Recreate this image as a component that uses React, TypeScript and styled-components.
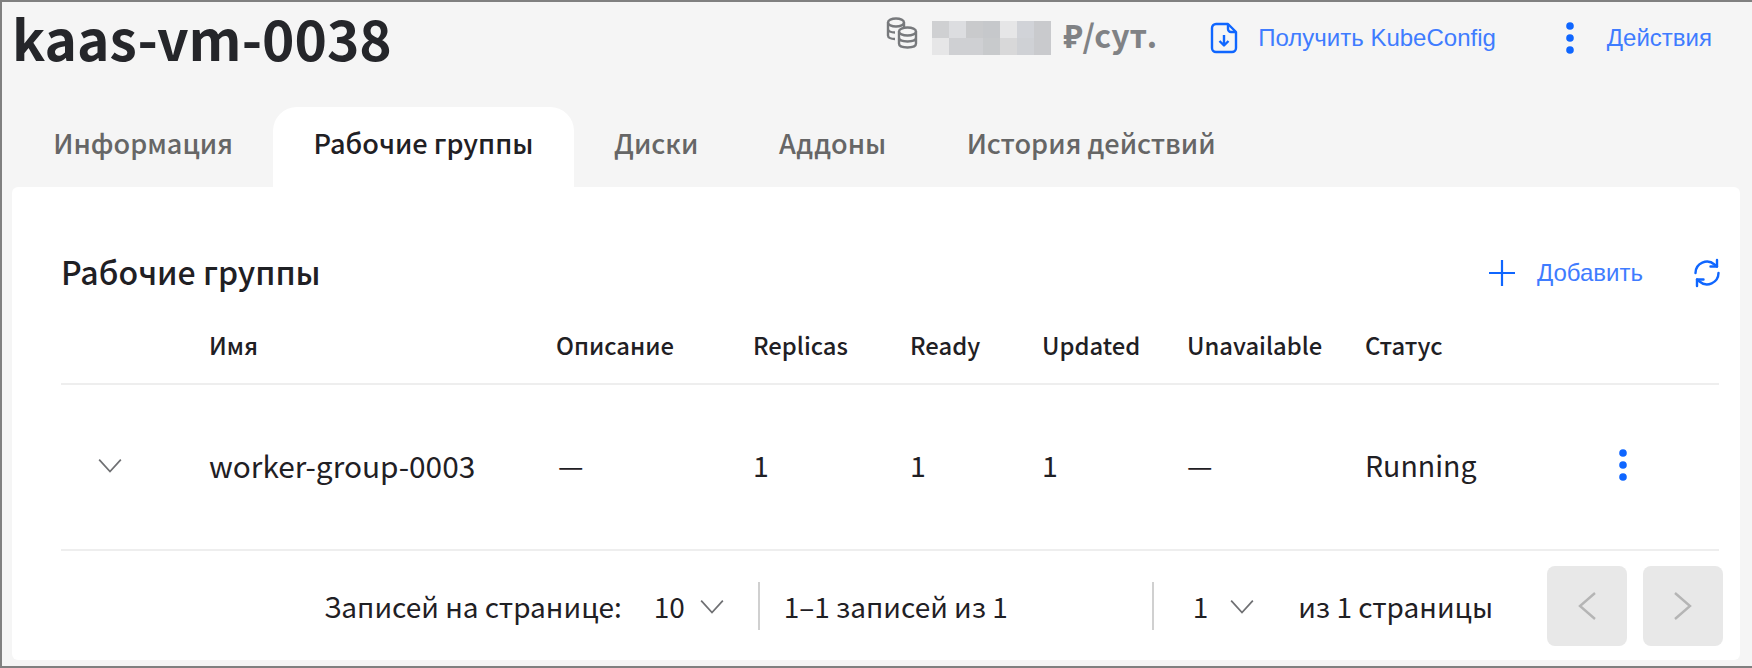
import React from "react";
import styled, { createGlobalStyle } from "styled-components";

const Global = createGlobalStyle`
  html, body { margin: 0; padding: 0; background: #f5f5f5; }
  * { box-sizing: border-box; }
`;

const Frame = styled.div`
  width: 1752px;
  height: 668px;
  border-top: 2px solid #808080;
  border-left: 2px solid #808080;
  border-bottom: 2px solid #808080;
  background: #f5f5f5;
  font-family: "Noto Sans CJK SC", "Noto Sans", sans-serif;
  color: #1f2024;
  display: flex;
  flex-direction: column;
`;

const Header = styled.header`
  height: 72px;
  display: flex;
  align-items: center;
  padding: 0 40px 0 10px;
`;

const Title = styled.h1`
  margin: 0;
  font-size: 55px;
  line-height: 70px;
  height: 72px;
  font-weight: 700;
  color: #25262a;
  flex: 1;
`;

const Price = styled.div`
  display: flex;
  align-items: center;
  color: #808285;
  font-size: 32px;
  line-height: 40px;
  font-weight: 700;
  margin-right: 53px;
`;

const CoinsSlot = styled.span`
  display: flex;
  margin: 0 14px 10px 0;
`;

const PriceUnit = styled.span`
  margin-bottom: 8px;
`;

const Blur = styled.div`
  display: grid;
  grid-template-columns: repeat(7, 17px);
  grid-template-rows: repeat(2, 17px);
  margin-right: 12px;
`;

const BlurCell = styled.span<{ $shade: string }>`
  background: ${(p) => p.$shade};
`;

const LinkButton = styled.button<{ $gap?: number; $ml?: number }>`
  border: 0;
  background: none;
  padding: 0;
  display: flex;
  align-items: center;
  gap: ${(p) => p.$gap ?? 20}px;
  margin-left: ${(p) => p.$ml ?? 0}px;
  font-family: "Liberation Sans", Arial, sans-serif;
  font-size: 24px;
  color: #3f7cff;
`;

const Tabs = styled.nav`
  height: 80px;
  margin-top: 33px;
  padding-left: 11px;
  display: flex;
`;

const Tab = styled.div<{ $active?: boolean }>`
  padding: 16px 40.25px 0;
  font-size: 27.100px;
  line-height: 40px;
  font-weight: 500;
  border-radius: 24px 24px 0 0;
  background: ${(p) => (p.$active ? "#fff" : "transparent")};
  color: ${(p) => (p.$active ? "#1f2024" : "#666666")};
`;

const Panel = styled.section`
  margin: 0 10px 0 10px;
  width: 1728px;
  height: 473px;
  background: #fff;
  border-radius: 6px;
  padding: 0 21px 0 49px;
  display: flex;
  flex-direction: column;
`;

const PanelHead = styled.div`
  height: 103px;
  padding-top: 65px;
  display: flex;
  align-items: center;
`;

const PanelTitle = styled.h2`
  margin: 0;
  flex: 1;
  font-size: 32px;
  line-height: 38px;
  font-weight: 500;
  color: #1f2024;
`;

const PanelActions = styled.div`
  display: flex;
  align-items: center;
  padding-top: 3px;
  margin-right: -2px;
`;

const Row = styled.div<{ $head?: boolean }>`
  display: grid;
  grid-template-columns: 148px 347px 197px 157px 132px 145px 178px 253px 1fr;
  align-items: center;
  height: ${(p) => (p.$head ? "95px" : "166px")};
  padding-top: ${(p) => (p.$head ? "17px" : "0")};
  padding-bottom: ${(p) => (p.$head ? "0" : "4px")};
  border-bottom: 2px solid #eeeeee;
  font-size: ${(p) => (p.$head ? "23.800px" : "28.500px")};
  line-height: 36px;
  font-weight: ${(p) => (p.$head ? 500 : 400)};
  color: #1f2024;
`;

const NameCell = styled.span`
  font-size: 29.800px;
`;

const DescCell = styled.span`
  padding-left: 2px;
`;

const Expand = styled.div`
  padding-left: 36px;
  display: flex;
`;

const Pager = styled.footer`
  flex: 1;
  display: flex;
  align-items: center;
  margin-right: -4px;
  font-size: 28px;
  line-height: 36px;
  color: #1f2024;
`;

const PagerLabel = styled.span<{ $left?: number }>`
  margin-left: ${(p) => p.$left ?? 0}px;
  white-space: nowrap;
`;

const Divider = styled.span<{ $left: number }>`
  width: 2px;
  height: 48px;
  background: #d0d0d0;
  margin-left: ${(p) => p.$left}px;
`;

const Select = styled.span<{ $left: number; $gap: number }>`
  margin-left: ${(p) => p.$left}px;
  display: flex;
  align-items: center;
  gap: ${(p) => p.$gap}px;
`;

const PageButton = styled.button<{ $left: number }>`
  flex: none;
  width: 80px;
  height: 80px;
  border: 0;
  padding: 0;
  border-radius: 8px;
  background: #e8e8e8;
  display: flex;
  align-items: center;
  justify-content: center;
  margin-left: ${(p) => p.$left}px;
`;

const Chevron = ({ color = "#6f7073", size = 26 }: { color?: string; size?: number }) => (
  <svg width={size} height={size} viewBox="0 0 24 24" fill="none" stroke={color} strokeWidth="1.6">
    <path d="M2 7l10 11L22 7" />
  </svg>
);

const Dots = () => (
  <svg width="10" height="34" viewBox="0 0 10 34" fill="#0f66ff">
    <circle cx="5" cy="5" r="3.800" />
    <circle cx="5" cy="17" r="3.800" />
    <circle cx="5" cy="29" r="3.800" />
  </svg>
);

const Coins = () => (
  <svg width="32" height="32" viewBox="0 0 32 32" fill="none" stroke="#77797c" strokeWidth="2.400">
    <ellipse cx="10" cy="5.500" rx="8" ry="4" />
    <path d="M2 5.500v13c0 2 3 3.500 7 3.500M2 12c0 2 3 3.500 7 3.500M18 5.500v5" />
    <ellipse cx="21.500" cy="14.500" rx="8.500" ry="4" />
    <path d="M13 14.500v12c0 2.500 3.500 4 8.500 4s8.500-1.500 8.500-4v-12M13 20.500c0 2.500 3.500 4 8.500 4s8.500-1.500 8.500-4" />
  </svg>
);

const Kube = () => (
  <svg width="28" height="32" viewBox="0 0 28 32" fill="none" stroke="#0f66ff" strokeWidth="2.400" strokeLinejoin="round">
    <path d="M18 2H6a4 4 0 0 0-4 4v20a4 4 0 0 0 4 4h16a4 4 0 0 0 4-4V10z" />
    <path d="M18 2v5a3 3 0 0 0 3 3h5" />
    <path d="M14 13v10M9.500 19l4.500 4.500 4.500-4.500" />
  </svg>
);

const Plus = () => (
  <svg width="26" height="26" viewBox="0 0 26 26" stroke="#0f66ff" strokeWidth="2.200">
    <path d="M13 0v26M0 13h26" />
  </svg>
);

const Refresh = () => (
  <svg width="28" height="30" viewBox="0 0 28 30" fill="none" stroke="#0f66ff" strokeWidth="2.400" strokeLinecap="round" strokeLinejoin="round">
    <path d="M2.500 15A11.500 11.500 0 0 1 21.500 6.500L24 8.500" />
    <path d="M24 2v6.500h-6.500" />
    <path d="M25.500 15A11.500 11.500 0 0 1 6.500 23.500L4 21.500" />
    <path d="M4 28v-6.500h6.500" />
  </svg>
);

const shades = [
  "#cfd0d2", "#dcdde0", "#c9cacc", "#c6c8cb", "#e6e6e7", "#d1d3d8", "#c9cacd",
  "#e6e6e7", "#cfd0d3", "#cfd0d3", "#c8cacc", "#d8d8d9", "#cfd1d5", "#c9cacd",
];

const columns = ["", "Имя", "Описание", "Replicas", "Ready", "Updated", "Unavailable", "Статус"];

export default function App() {
  return (
    <Frame>
      <Global />
      <Header>
        <Title>kaas-vm-0038</Title>
        <Price>
          <CoinsSlot>
            <Coins />
          </CoinsSlot>
          <Blur>
            {shades.map((s, i) => (
              <BlurCell key={i} $shade={s} />
            ))}
          </Blur>
          <PriceUnit>₽/сут.</PriceUnit>
        </Price>
        <LinkButton $gap={20}>
          <Kube />
          Получить KubeConfig
        </LinkButton>
        <LinkButton $gap={32} $ml={69}>
          <Dots />
          Действия
        </LinkButton>
      </Header>
      <Tabs>
        <Tab>Информация</Tab>
        <Tab $active>Рабочие группы</Tab>
        <Tab>Диски</Tab>
        <Tab>Аддоны</Tab>
        <Tab>История действий</Tab>
      </Tabs>
      <Panel>
        <PanelHead>
          <PanelTitle>Рабочие группы</PanelTitle>
          <PanelActions>
            <LinkButton $gap={22}>
              <Plus />
              Добавить
            </LinkButton>
            <LinkButton $ml={50}>
              <Refresh />
            </LinkButton>
          </PanelActions>
        </PanelHead>
        <Row $head>
          {columns.map((c, i) => (
            <span key={i}>{c}</span>
          ))}
        </Row>
        <Row>
          <Expand>
            <Chevron />
          </Expand>
          <NameCell>worker-group-0003</NameCell>
          <DescCell>—</DescCell>
          <span>1</span>
          <span>1</span>
          <span>1</span>
          <span>—</span>
          <span>Running</span>
          <Dots />
        </Row>
        <Pager>
          <PagerLabel $left={263}>Записей на странице:</PagerLabel>
          <Select $left={32} $gap={14}>
            10
            <Chevron />
          </Select>
          <Divider $left={33} />
          <PagerLabel $left={24}>1–1 записей из 1</PagerLabel>
          <Divider $left={144} />
          <Select $left={39} $gap={21}>
            1
            <Chevron />
          </Select>
          <PagerLabel $left={43}>из 1 страницы</PagerLabel>
          <PageButton $left={54}>
            <svg width="20" height="32" viewBox="0 0 20 32" fill="none" stroke="#b5b5b5" strokeWidth="2.400">
              <path d="M18 3L3 16l15 13" />
            </svg>
          </PageButton>
          <PageButton $left={16}>
            <svg width="20" height="32" viewBox="0 0 20 32" fill="none" stroke="#b5b5b5" strokeWidth="2.400">
              <path d="M2 3l15 13L2 29" />
            </svg>
          </PageButton>
        </Pager>
      </Panel>
    </Frame>
  );
}
